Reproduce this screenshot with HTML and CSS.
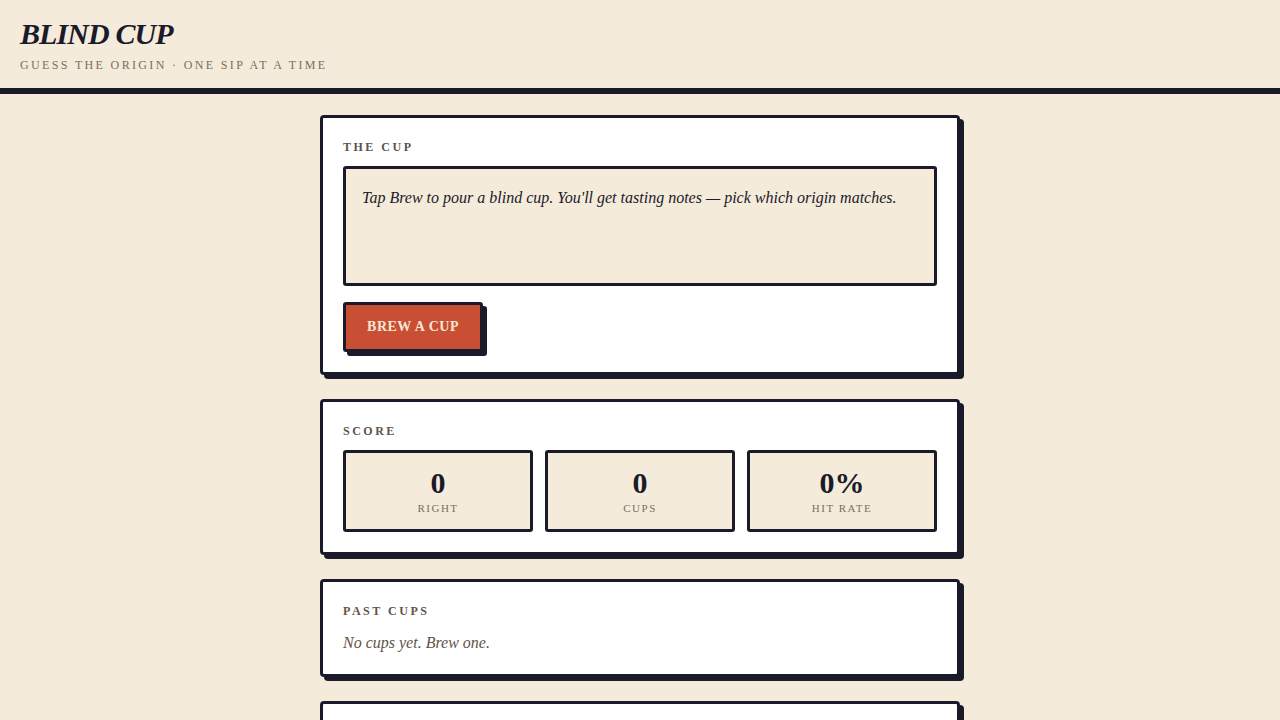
FILE: index.html
```html
<!DOCTYPE html>
<html>
<head>
<meta charset="utf-8">
<link rel="stylesheet" href="styles.css">
</head>
<body>
<header class="site-header">
  <h1 class="title">BLIND CUP</h1>
  <p class="tagline">GUESS THE ORIGIN · ONE SIP AT A TIME</p>
</header>
<main class="main">
  <section class="card">
    <h2 class="label">THE CUP</h2>
    <div class="notes">Tap Brew to pour a blind cup. You'll get tasting notes — pick which origin matches.</div>
    <button class="brew">BREW A CUP</button>
  </section>
  <section class="card">
    <h2 class="label">SCORE</h2>
    <div class="stats">
      <div class="stat"><div class="num">0</div><div class="stat-label">RIGHT</div></div>
      <div class="stat"><div class="num">0</div><div class="stat-label">CUPS</div></div>
      <div class="stat"><div class="num">0%</div><div class="stat-label">HIT RATE</div></div>
    </div>
  </section>
  <section class="card">
    <h2 class="label">PAST CUPS</h2>
    <p class="empty">No cups yet. Brew one.</p>
  </section>
  <section class="card card-empty"></section>
</main>
</body>
</html>
```
FILE: styles.css
```css
* { box-sizing: border-box; }
html, body { margin: 0; padding: 0; }
body {
  background: #f4ebda;
  font-family: "Liberation Serif", "Times New Roman", serif;
  color: #1b1a2b;
}
.site-header {
  padding: 16px 20px 15px;
  border-bottom: 6px solid #1b1a2b;
}
.title {
  margin: 0;
  font-size: 30px;
  font-style: italic;
  font-weight: bold;
  line-height: 36px;
  letter-spacing: -0.9px;
}
.tagline {
  margin: 6px 0 0;
  font-size: 12px;
  letter-spacing: 2.35px;
  color: #7a6f60;
  line-height: 15px;
}
.main {
  width: 640px;
  margin: 21px auto 0;
  display: flex;
  flex-direction: column;
  gap: 24px;
}
.card {
  background: #fff;
  border: 3px solid #1b1a2b;
  border-radius: 4px;
  box-shadow: 4px 4px 0 #1b1a2b;
  padding: 21px 20px 20px;
}
.card-empty { height: 80px; }
.label {
  margin: 0 0 11px;
  font-size: 12px;
  font-weight: bold;
  letter-spacing: 2.5px;
  color: #5e5349;
  line-height: 16px;
}
.notes {
  background: #f4ebda;
  border: 3px solid #1b1a2b;
  border-radius: 3px;
  height: 120px;
  padding: 16px 16px;
  font-size: 16px;
  font-style: italic;
  line-height: 26px;
  margin-bottom: 16px;
}
.brew {
  display: block;
  width: 140px;
  height: 50px;
  background: #c84e34;
  color: #f8e6d4;
  border: 3px solid #1b1a2b;
  border-radius: 3px;
  box-shadow: 4px 4px 0 #1b1a2b;
  font-family: "Liberation Serif", "Times New Roman", serif;
  font-weight: bold;
  font-size: 14px;
  letter-spacing: 0.5px;
  padding: 0;
}
.stats {
  display: grid;
  grid-template-columns: 1fr 1fr 1fr;
  gap: 12px;
}
.stat {
  background: #f4ebda;
  border: 3px solid #1b1a2b;
  border-radius: 3px;
  height: 82px;
  padding-top: 13px;
  text-align: center;
}
.num {
  font-size: 30px;
  font-weight: bold;
  line-height: 34px;
}
.stat-label {
  font-size: 11px;
  letter-spacing: 1.5px;
  color: #7a6f60;
  line-height: 14px;
  margin-top: 1px;
}
.empty {
  margin: 0;
  padding-top: 2px;
  font-size: 16px;
  font-style: italic;
  color: #5e5349;
  line-height: 22px;
}
```
